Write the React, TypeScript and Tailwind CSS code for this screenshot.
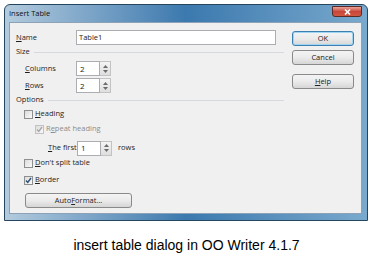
import React from 'react';

const U: React.FC<{ children: React.ReactNode }> = ({ children }) => <span className="underline underline-offset-1">{children}</span>;

const Spin: React.FC<{ value: string }> = ({ value }) => (
  <div className="flex h-[15px]">
    <div className="w-[24px] h-full border border-[#abadb3] bg-white pl-[3px] flex items-center text-[8px] text-[#222]">{value}</div>
    <div className="w-[11px] h-full border border-l-0 border-[#c3c3c3] bg-gradient-to-b from-[#f4f4f4] to-[#dedede] flex flex-col items-center justify-center gap-[2px]">
      <svg width="5" height="3" viewBox="0 0 5 3"><path d="M0 3 L2.5 0 L5 3 Z" fill="#6b6b6b" /></svg>
      <svg width="5" height="3" viewBox="0 0 5 3"><path d="M0 0 L2.5 3 L5 0 Z" fill="#6b6b6b" /></svg>
    </div>
  </div>
);

const Check: React.FC<{ checked?: boolean; disabled?: boolean }> = ({ checked, disabled }) => (
  <div className={`w-[9px] h-[9px] border ${disabled ? 'border-[#c2c2c2]' : 'border-[#8e8f8f]'} bg-gradient-to-br from-[#dcdcdc] to-[#fafafa] flex items-center justify-center`}>
    {checked && (
      <svg width="7" height="7" viewBox="0 0 7 7">
        <path d="M1 3.5 L2.8 5.5 L6 1" fill="none" stroke={disabled ? '#a8a8a8' : '#2d4f7a'} strokeWidth="1.4" />
      </svg>
    )}
  </div>
);

const Btn: React.FC<{ children: React.ReactNode; className?: string; focus?: boolean }> = ({ children, className, focus }) => (
  <div className={`h-[15px] rounded-[3px] border ${focus ? 'border-[#3c7fb1] shadow-[inset_0_0_0_1px_#9fd5f3]' : 'border-[#8a8a8a]'} bg-gradient-to-b from-[#f4f4f4] via-[#ebebeb] to-[#d6d6d6] flex items-center justify-center text-[7.5px] text-[#222] ${className ?? ''}`}>
    {children}
  </div>
);

export default function App() {
  return (
    <div className="w-[373px] h-[255px] bg-white" style={{ fontFamily: '"Open Sans", "Noto Sans", sans-serif' }}>
      <div className="pt-[4px] pl-[4px]">
        {/* window frame */}
        <div className="w-[364px] h-[217px] border border-[#26465f] rounded-t-[6px] bg-gradient-to-r from-[#b3cbdd] via-[#3b79ae] to-[#79a9cd] pl-[4px] pr-[5px] flex flex-col">
          <div className="h-[17px] flex items-center justify-between shrink-0">
            <span className="text-[7.5px] text-[#111] pt-[1px]">Insert Table</span>
            <div className="w-[30px] h-[11px] -mt-[4px] rounded-b-[3px] border border-[#5a2b26] bg-gradient-to-b from-[#e9a39a] via-[#c8473b] to-[#d0573f] flex items-center justify-center">
              <svg width="7" height="6" viewBox="0 0 7 6"><path d="M1 0.5 L6 5.5 M6 0.5 L1 5.5" stroke="#fff" strokeWidth="1.6" /></svg>
            </div>
          </div>
          {/* client */}
          <div className="h-[192px] border border-[#8da2b6] bg-[#f0f0f0] flex pl-[6px] pt-[7px] text-[7.5px] text-[#1e1e1e]">
            <div className="w-[268px] flex flex-col">
              <div className="h-[15px] flex items-center">
                <span className="w-[60px]"><U>N</U>ame</span>
                <div className="w-[200px] h-[15px] border border-[#abadb3] bg-white flex items-center pl-[2px] text-[#222]">Table1</div>
              </div>
              <div className="h-[14px] flex items-center gap-[4px]">
                <span>Size</span>
                <div className="flex-1 h-px bg-[#d5d9dd]" />
              </div>
              <div className="h-[15px] mt-[2px] flex items-center pl-[9px]">
                <span className="w-[51px]"><U>C</U>olumns</span>
                <Spin value="2" />
              </div>
              <div className="h-[15px] mt-[2px] flex items-center pl-[9px]">
                <span className="w-[51px]"><U>R</U>ows</span>
                <Spin value="2" />
              </div>
              <div className="h-[14px] flex items-center gap-[4px]">
                <span>Options</span>
                <div className="flex-1 h-px bg-[#d5d9dd]" />
              </div>
              <div className="h-[14px] flex items-center gap-[2px] pl-[8px]">
                <Check />
                <span><U>H</U>eading</span>
              </div>
              <div className="h-[14px] mt-[1px] flex items-center gap-[2px] pl-[19px] text-[#8c8c8c]">
                <Check checked disabled />
                <span>R<U>e</U>peat heading</span>
              </div>
              <div className="h-[16px] mt-[4px] flex items-center pl-[32px]">
                <span className="w-[29px]"><U>T</U>he first</span>
                <Spin value="1" />
                <span className="ml-[6px]">rows</span>
              </div>
              <div className="h-[14px] flex items-center gap-[2px] pl-[8px]">
                <Check />
                <span><U>D</U>on't split table</span>
              </div>
              <div className="h-[14px] mt-[3px] flex items-center gap-[2px] pl-[8px]">
                <Check checked />
                <span><U>B</U>order</span>
              </div>
              <div className="mt-[6px] pl-[9px]">
                <Btn className="w-[107px]">Auto<U>F</U>ormat...</Btn>
              </div>
            </div>
            <div className="ml-[8px] flex flex-col pt-[1px]">
              <Btn focus className="w-[62px]">OK</Btn>
              <Btn className="w-[62px] mt-[4px]">Cancel</Btn>
              <Btn className="w-[62px] mt-[9px]"><U>H</U>elp</Btn>
            </div>
          </div>
        </div>
      </div>
      <p className="mt-[16px] text-center text-[14px] leading-[17px] text-black" style={{ fontFamily: '"Liberation Sans", Arial, sans-serif' }}>
        insert table dialog in OO Writer 4.1.7
      </p>
    </div>
  );
}
